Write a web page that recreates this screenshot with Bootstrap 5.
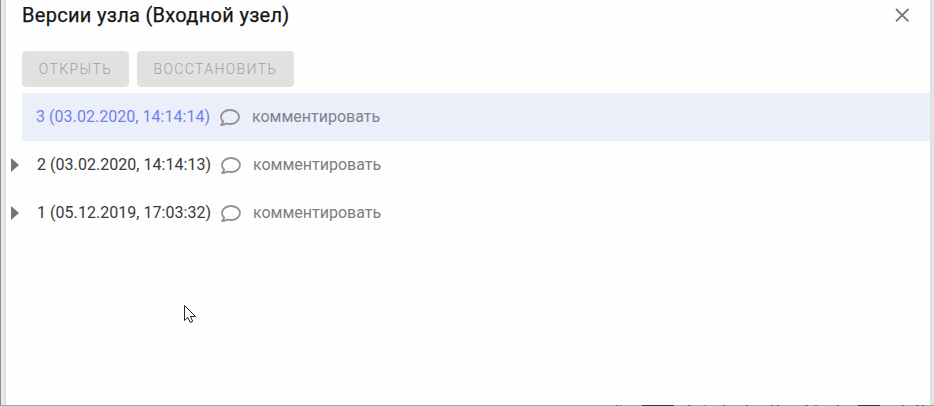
<!DOCTYPE html>
<html lang="ru">
<head>
<meta charset="utf-8">
<meta name="viewport" content="width=device-width, initial-scale=1">
<title>Версии узла</title>
<link href="https://cdn.jsdelivr.net/npm/bootstrap@5.3.0/dist/css/bootstrap.min.css" rel="stylesheet">
<style>
body { font-family: Roboto, "Liberation Sans", sans-serif; background: #e9e9f1; color: #222; }
.window-frame { height: 406px; border-left: 1px solid #8d898e; border-bottom: 1px solid #a5a5a5; padding-left: 3px; padding-right: 1px; }
.panel { background: #fefefe; border-left: 2px solid #dfdde1; border-right: 3px solid #e1e1e2; padding-left: 16px; }
.panel-head { height: 51px; padding-right: 20px; }
.panel-title { font-size: 20px; line-height: 30px; letter-spacing: .3px; font-weight: 400; -webkit-text-stroke: .25px #151515; color: #151515; }
.close-btn { width: 16px; height: 16px; margin-top: 7px; line-height: 0; }
.btn-flat { --bs-btn-disabled-bg: #e0e2e1; --bs-btn-disabled-color: #a0a1a1; --bs-btn-disabled-opacity: 1; --bs-btn-disabled-border-color: #e0e2e1; height: 36px; font-size: 14px; font-weight: 300; letter-spacing: 1.4px; border-radius: 4px; padding: 0; }
.open-btn { width: 107px; }
.restore-btn { width: 157px; }
.versions { margin-top: 6px; }
.version { --bs-list-group-item-padding-x: 0; height: 48px; font-size: 16px; line-height: 24px; color: #3a3a3a; background: transparent; padding: 0 0 0 15px; }
.version.chosen { background: #eaeffa; color: #6f83ec; padding-left: 14px; }
.version-name { width: 184px; letter-spacing: .04px; }
.bubble { width: 20px; height: 17px; margin-right: 12px; color: #929295; }
.comment { color: #7d7d7f; }
.chosen .comment { color: #7f8290; }
.caret { width: 8px; height: 14px; margin-left: -26px; margin-right: 18px; color: #757575; }
.pointer { left: 184px; top: 305px; }
.lower-edge { left: 0; bottom: 0; }
</style>
<script src="https://cdn.jsdelivr.net/npm/bootstrap@5.3.0/dist/js/bootstrap.bundle.min.js"></script>
</head>
<body class="overflow-hidden">
<svg width="0" height="0" class="position-absolute">
  <symbol id="bubble" viewBox="0 0 20 17"><path d="M10 1C5 1 1 4 1 7.9c0 1.9.8 3.4 2.1 4.6-.2 1.4-.9 2.5-2 3.5 2 .1 3.8-.5 5.1-1.5 1.2.4 2.4.5 3.8.5 5 0 9-3.1 9-7.1S15 1 10 1Z" fill="none" stroke="currentColor" stroke-width="1.8" stroke-linejoin="round"/></symbol>
  <symbol id="caret" viewBox="0 0 8 14"><path d="M0 0 8 7 0 14Z" fill="currentColor"/></symbol>
</svg>
<div class="window-frame">
  <main class="panel h-100">
    <header class="panel-head d-flex justify-content-between align-items-start">
      <h1 class="panel-title m-0">Версии узла (Входной узел)</h1>
      <button class="btn close-btn p-0 border-0" aria-label="Закрыть"><svg width="16" height="16" viewBox="0 0 16 16"><path d="m2 2 12.4 12.4M14.4 2 2 14.4" stroke="#77777a" stroke-width="1.8"/></svg></button>
    </header>
    <div class="d-flex gap-2">
      <button class="btn btn-flat open-btn text-uppercase" disabled>Открыть</button>
      <button class="btn btn-flat restore-btn text-uppercase" disabled>Восстановить</button>
    </div>
    <ul class="list-group list-group-flush versions">
      <li class="list-group-item version chosen border-0 d-flex align-items-center">
        <span class="version-name">3 (03.02.2020, 14:14:14)</span><svg class="bubble"><use href="#bubble"/></svg><span class="comment">комментировать</span>
      </li>
      <li class="list-group-item version border-0 d-flex align-items-center">
        <svg class="caret"><use href="#caret"/></svg><span class="version-name">2 (03.02.2020, 14:14:13)</span><svg class="bubble"><use href="#bubble"/></svg><span class="comment">комментировать</span>
      </li>
      <li class="list-group-item version border-0 d-flex align-items-center">
        <svg class="caret"><use href="#caret"/></svg><span class="version-name">1 (05.12.2019, 17:03:32)</span><svg class="bubble"><use href="#bubble"/></svg><span class="comment">комментировать</span>
      </li>
    </ul>
  </main>
</div>
<svg class="pointer position-absolute" width="13" height="19" viewBox="0 0 13 19"><path d="M.5.5v15l3.4-3.1 2.3 5 2.5-1.1-2.2-4.8h5Z" fill="#fff" stroke="#25252b"/></svg>
<svg class="lower-edge position-absolute" width="934" height="1"><path d="M616 .5h2m2 0h1m67 0h3m13 0h1m18 0h2m21 0h2m23 0h2m4 0h2m26 0h3m7 0h2m20 0h2m63 0h2m12 0h3m3 0h2" stroke="#666"/><path d="M642 .5h32m184 0h22" stroke="#333"/></svg>
</body>
</html>
